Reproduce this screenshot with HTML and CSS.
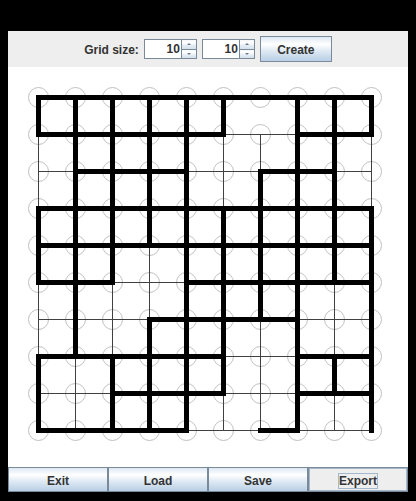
FILE: index.html
```html
<!DOCTYPE html>
<html>
<head>
<meta charset="utf-8">
<link rel="stylesheet" href="styles.css">
</head>
<body>
<div class="window">
  <div class="toolbar">
    <span class="label">Grid size:</span>
    <div class="spinner">
      <div class="spin-field">10</div>
      <div class="spin-arrows">
        <div class="spin-btn"><i class="arr up"></i></div>
        <div class="spin-btn"><i class="arr down"></i></div>
      </div>
    </div>
    <div class="spinner">
      <div class="spin-field">10</div>
      <div class="spin-arrows">
        <div class="spin-btn"><i class="arr up"></i></div>
        <div class="spin-btn"><i class="arr down"></i></div>
      </div>
    </div>
    <button class="btn create">Create</button>
  </div>
  <div class="canvas">
    <svg class="grid" width="400" height="400" viewBox="0 0 400 400">
      <defs>
        <g id="row" fill="none" stroke="#c0c0c0" stroke-width="1">
          <circle cx="30.5" cy="30.5" r="10"/>
          <circle cx="67.5" cy="30.5" r="10"/>
          <circle cx="104.5" cy="30.5" r="10"/>
          <circle cx="141.5" cy="30.5" r="10"/>
          <circle cx="178.5" cy="30.5" r="10"/>
          <circle cx="215.5" cy="30.5" r="10"/>
          <circle cx="252.5" cy="30.5" r="10"/>
          <circle cx="289.5" cy="30.5" r="10"/>
          <circle cx="326.5" cy="30.5" r="10"/>
          <circle cx="363.5" cy="30.5" r="10"/>
        </g>
      </defs>
      <use href="#row" y="0"/>
      <use href="#row" y="37"/>
      <use href="#row" y="74"/>
      <use href="#row" y="111"/>
      <use href="#row" y="148"/>
      <use href="#row" y="185"/>
      <use href="#row" y="222"/>
      <use href="#row" y="259"/>
      <use href="#row" y="296"/>
      <use href="#row" y="333"/>
      <path class="thin" d="M215.5 67.5H289.5 M30.5 104.5H67.5 M178.5 104.5H252.5 M326.5 104.5H363.5 M104.5 215.5H178.5 M30.5 252.5H141.5 M289.5 252.5H363.5 M215.5 289.5H289.5 M30.5 326.5H104.5 M215.5 326.5H289.5 M178.5 363.5H252.5 M289.5 363.5H363.5 M30.5 67.5V141.5 M30.5 215.5V289.5 M67.5 289.5V363.5 M104.5 215.5V289.5 M141.5 178.5V252.5 M215.5 67.5V141.5 M215.5 326.5V363.5 M252.5 67.5V104.5 M252.5 252.5V363.5 M326.5 215.5V289.5 M326.5 326.5V363.5 M363.5 67.5V141.5"/>
      <path class="thick" d="M30.5 30.5H363.5 M30.5 67.5H215.5 M289.5 67.5H363.5 M67.5 104.5H178.5 M252.5 104.5H326.5 M30.5 141.5H363.5 M30.5 178.5H363.5 M30.5 215.5H104.5 M178.5 215.5H363.5 M141.5 252.5H289.5 M30.5 289.5H215.5 M289.5 289.5H363.5 M104.5 326.5H215.5 M289.5 326.5H363.5 M30.5 363.5H178.5 M252.5 363.5H289.5 M30.5 30.5V67.5 M30.5 141.5V215.5 M30.5 289.5V363.5 M67.5 30.5V289.5 M104.5 30.5V215.5 M104.5 289.5V363.5 M141.5 30.5V178.5 M141.5 252.5V363.5 M178.5 30.5V363.5 M215.5 30.5V67.5 M215.5 141.5V326.5 M252.5 104.5V252.5 M289.5 30.5V363.5 M326.5 30.5V215.5 M326.5 289.5V326.5 M363.5 30.5V67.5 M363.5 141.5V363.5"/>
    </svg>
  </div>
  <div class="actions">
    <button class="btn">Exit</button>
    <button class="btn">Load</button>
    <button class="btn">Save</button>
    <button class="btn export"><span class="focus">Export</span></button>
  </div>
</div>
</body>
</html>
```

FILE: styles.css
```css
html, body {
  margin: 0;
  padding: 0;
  background: #000;
}

body {
  font-family: "Liberation Sans", Arial, sans-serif;
  font-size: 12px;
  font-weight: bold;
  color: #333;
}

.window {
  width: 400px;
  margin: 31px 8px 9px 8px;
  display: flex;
  flex-direction: column;
}

.toolbar {
  height: 36px;
  background: #eeeeee;
  display: flex;
  align-items: center;
  justify-content: center;
  gap: 5px;
}

.label {
  line-height: 14px;
  padding-top: 2px;
}

.spinner {
  display: flex;
  width: 53px;
  height: 20px;
}

.spin-field {
  flex: 1;
  background: #fff;
  border-top: 1px solid #7a8a99;
  border-left: 1px solid #7a8a99;
  border-bottom: 1px solid #7a8a99;
  text-align: right;
  line-height: 18px;
  padding-right: 1px;
}

.spin-arrows {
  width: 16px;
  display: flex;
  flex-direction: column;
}

.spin-btn {
  flex: 1;
  border: 1px solid #7a8a99;
  background: linear-gradient(to bottom, #f4f7fa 0%, #ffffff 30%, #e6edf4 60%, #d4e0ec 100%);
  display: flex;
  align-items: center;
  justify-content: center;
}

.spin-btn + .spin-btn {
  border-top: none;
}

.arr {
  width: 0;
  height: 0;
  border-left: 2px solid transparent;
  border-right: 2px solid transparent;
}

.arr.up {
  border-bottom: 2px solid #6b7a88;
}

.arr.down {
  border-top: 2px solid #6b7a88;
}

.btn {
  font: inherit;
  color: #333;
  margin: 0;
  padding: 2px 0 0 0;
  border: 1px solid #7a8a99;
  background: linear-gradient(to bottom, #dde8f3 0%, #ffffff 30%, #dde8f3 60%, #b8cfe5 100%);
  display: flex;
  align-items: center;
  justify-content: center;
}

.create {
  width: 72px;
  height: 26px;
}

.canvas {
  height: 400px;
  background: #fff;
}

.grid {
  display: block;
}

.thin {
  fill: none;
  stroke: #404040;
  stroke-width: 1;
  shape-rendering: crispEdges;
}

.thick {
  fill: none;
  stroke: #000;
  stroke-width: 5;
  stroke-linecap: square;
  shape-rendering: crispEdges;
}

.actions {
  height: 25px;
  display: grid;
  grid-template-columns: repeat(4, 1fr);
}

.actions .btn {
  height: 25px;
}

.export {
  background: #eeeeee;
  border: 1px solid #7a8a99;
  box-shadow: inset 0 0 0 1px #a3b8cc;
}

.focus {
  display: inline-block;
  line-height: 14px;
  border: 1px solid #a3b8cc;
  padding: 0;
}
```
